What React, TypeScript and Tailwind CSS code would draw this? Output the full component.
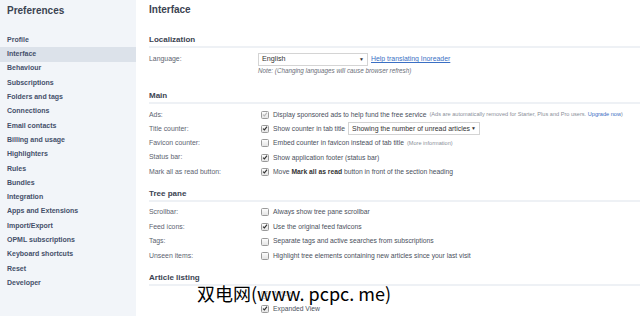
import React from "react";

const sidebar = [
  "Profile",
  "Interface",
  "Behaviour",
  "Subscriptions",
  "Folders and tags",
  "Connections",
  "Email contacts",
  "Billing and usage",
  "Highlighters",
  "Rules",
  "Bundles",
  "Integration",
  "Apps and Extensions",
  "Import/Export",
  "OPML subscriptions",
  "Keyboard shortcuts",
  "Reset",
  "Developer",
];

function Check({ checked, disabled }: { checked?: boolean; disabled?: boolean }) {
  return (
    <div className="w-[8px] h-[8px] rounded-[1.5px] border border-[#9a9a9a] bg-gradient-to-b from-[#fdfdfd] to-[#e4e4e4] flex items-center justify-center shrink-0">
      {checked && (
        <svg width="7" height="7" viewBox="0 0 7 7">
          <path
            d="M1.2 3.6 L2.8 5.2 L5.9 1.3"
            fill="none"
            stroke={disabled ? "#b8b8b8" : "#333"}
            strokeWidth="1.4"
          />
        </svg>
      )}
    </div>
  );
}

function Heading({ children, className }: { children: React.ReactNode; className?: string }) {
  return (
    <div
      className={
        "h-[14px] flex items-center border-b-2 border-[#eef1f5] text-[8px] font-bold text-[#3b4351] " +
        (className || "")
      }
    >
      {children}
    </div>
  );
}

function Row({ label, children, tall }: { label: string; children: React.ReactNode; tall?: boolean }) {
  return (
    <div className={(tall ? "h-[14.6px]" : "h-[14.3px]") + " flex items-center"}>
      <div className="w-[112px] text-[6.9px] text-[#5c6370]">{label}</div>
      <div className="flex items-center gap-[3px] text-[6.75px] text-[#4a505c]">{children}</div>
    </div>
  );
}

export default function App() {
  return (
    <div
      className="w-[640px] h-[316px] overflow-hidden flex bg-white relative"
      style={{ fontFamily: "'Liberation Sans', Arial, sans-serif" }}
    >
      <div className="w-[136px] shrink-0 bg-[#f2f5f9] flex flex-col">
        <div className="h-[21px] flex items-center pl-[7px] text-[10px] font-bold text-[#3b4351]">Preferences</div>
        <div className="mt-[12px] flex flex-col">
          {sidebar.map((s) => (
            <div
              key={s}
              className={
                "h-[14.3px] flex items-center pl-[7px] text-[7px] font-bold text-[#45506a] " +
                (s === "Interface" ? "bg-[#dce2ea]" : "")
              }
            >
              {s}
            </div>
          ))}
        </div>
      </div>
      <div className="flex-1 pl-[13px] flex flex-col">
        <div className="h-[21px] flex items-center text-[10px] font-bold text-[#3b4351]">Interface</div>
        <Heading className="mt-[14px]">Localization</Heading>
        <div className="mt-[5px] h-[14px] flex items-center">
          <div className="w-[109px] text-[6.9px] text-[#5c6370]">Language:</div>
          <div className="w-[110px] h-[13px] border border-[#d4d4d4] flex items-center justify-between px-[3px] text-[7.2px] text-[#333]">
            <span>English</span>
            <span className="text-[5px]">▼</span>
          </div>
          <span className="ml-[3px] text-[6.9px] text-[#3a6fc4] underline">Help translating Inoreader</span>
        </div>
        <div className="h-[10px] flex items-center pl-[109px] text-[6.3px] italic text-[#6b6f78]">
          Note: (Changing languages will cause browser refresh)
        </div>
        <Heading className="mt-[14px]">Main</Heading>
        <div className="mt-[4px]">
          <Row label="Ads:">
            <Check checked disabled />
            <span className="ml-[1px]">Display sponsored ads to help fund the free service</span>
            <span className="text-[5.6px] text-[#8a8f99]">
              (Ads are automatically removed for Starter, Plus and Pro users.{" "}
              <span className="text-[#3a6fc4]">Upgrade now</span>)
            </span>
          </Row>
          <Row label="Title counter:">
            <Check checked />
            <span className="ml-[1px]">Show counter in tab title</span>
            <div className="w-[132px] h-[13px] border border-[#d4d4d4] flex items-center justify-between px-[3px] text-[6.9px] text-[#333]">
              <span>Showing the number of unread articles</span>
              <span className="text-[5px]">▼</span>
            </div>
          </Row>
          <Row label="Favicon counter:">
            <Check />
            <span className="ml-[1px]">Embed counter in favicon instead of tab title</span>
            <span className="text-[5.6px] text-[#8a8f99]">(More information)</span>
          </Row>
          <Row label="Status bar:">
            <Check checked />
            <span className="ml-[1px]">Show application footer (status bar)</span>
          </Row>
          <Row label="Mark all as read button:">
            <Check checked />
            <span className="ml-[1px]">
              Move <b className="text-[#333]">Mark all as read</b> button in front of the section heading
            </span>
          </Row>
        </div>
        <Heading className="mt-[9px]">Tree pane</Heading>
        <div className="mt-[3px]">
          <Row label="Scrollbar:" tall>
            <Check />
            <span className="ml-[1px]">Always show tree pane scrollbar</span>
          </Row>
          <Row label="Feed icons:" tall>
            <Check checked />
            <span className="ml-[1px]">Use the original feed favicons</span>
          </Row>
          <Row label="Tags:" tall>
            <Check />
            <span className="ml-[1px]">Separate tags and active searches from subscriptions</span>
          </Row>
          <Row label="Unseen items:" tall>
            <Check />
            <span className="ml-[1px]">Highlight tree elements containing new articles since your last visit</span>
          </Row>
        </div>
        <Heading className="mt-[9px]">Article listing</Heading>
        <div className="mt-[1px]">
          <Row label="">
            <Check checked />
            <span className="ml-[1px]">Articles</span>
          </Row>
          <Row label="">
            <Check checked />
            <span className="ml-[1px]">Expanded View</span>
          </Row>
        </div>
      </div>
      <div
        className="absolute left-[197px] top-[282px] text-[18px] leading-[22px] text-black whitespace-nowrap [text-shadow:0_0_2px_#fff,0_0_2px_#fff,0_0_3px_#fff]"
        style={{ fontFamily: "'Noto Sans CJK SC', 'DejaVu Sans', sans-serif" }}
      >
        双电网(www. pcpc. me)
      </div>
    </div>
  );
}
